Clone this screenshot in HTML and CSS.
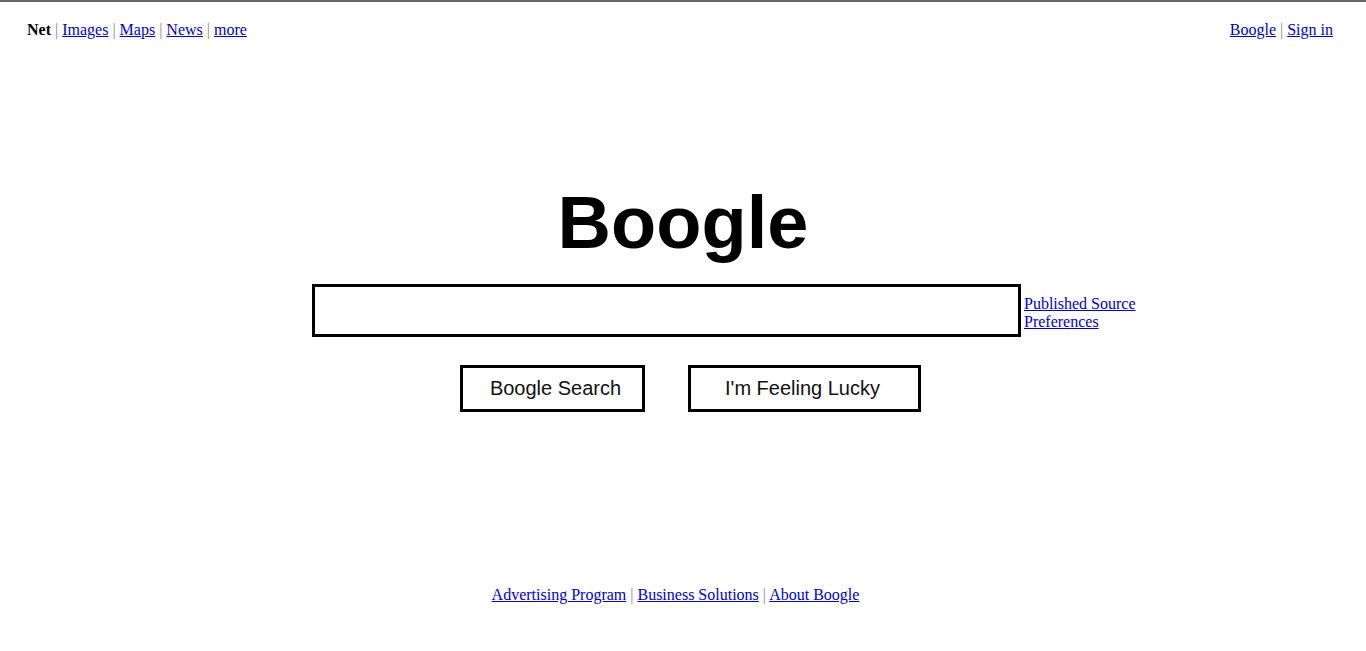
FILE: index.html
```html
<!DOCTYPE html>
<html>
<head>
<meta charset="utf-8">
<title>Boogle</title>
<link rel="stylesheet" href="styles.css">
</head>
<body>
<div class="topbar">
  <div class="nav"><b>Net</b> <span class="sep">|</span> <a href="#">Images</a> <span class="sep">|</span> <a href="#">Maps</a> <span class="sep">|</span> <a href="#">News</a> <span class="sep">|</span> <a href="#">more</a></div>
  <div class="nav"><a href="#">Boogle</a> <span class="sep">|</span> <a href="#">Sign in</a></div>
</div>
<h1 class="logo">Boogle</h1>
<form class="search-form">
  <div class="search-row">
    <input class="search-input" type="text">
    <div class="side-links">
      <a href="#">Published Source</a><br>
      <a href="#">Preferences</a>
    </div>
  </div>
  <div class="buttons">
    <button type="button" class="btn btn-search">Boogle Search</button>
    <button type="button" class="btn btn-lucky">I'm Feeling Lucky</button>
  </div>
</form>
<div class="footer"><a href="#">Advertising Program</a> <span class="sep">|</span> <a href="#">Business Solutions</a> <span class="sep">|</span> <a href="#">About Boogle</a></div>
</body>
</html>
```
FILE: styles.css
```css
html, body {
  margin: 0;
  padding: 0;
  background: #fff;
}
body {
  border-top: 2px solid #666;
  font-family: "Liberation Serif", "Times New Roman", serif;
  font-size: 16px;
  color: #000;
}
a {
  color: #0000cc;
  text-decoration: underline;
}
.sep {
  color: #888;
}
.topbar {
  display: flex;
  justify-content: space-between;
  padding: 19px 33px 0 27px;
  line-height: 18px;
}
.logo {
  margin: 147px 0 0 0;
  font-family: "Liberation Sans", Arial, sans-serif;
  font-weight: bold;
  font-size: 74px;
  line-height: 74px;
  text-align: center;
}
.search-form {
  margin: 0;
}
.search-row {
  margin-top: 24px;
  display: flex;
  align-items: center;
  padding-left: 312px;
}
.search-input {
  width: 709px;
  height: 53px;
  box-sizing: border-box;
  border: 3px solid #000;
  margin: 0;
  padding: 0 6px;
  font-size: 20px;
  outline: none;
}
.side-links {
  margin-left: 3px;
  line-height: 18px;
  padding-top: 4px;
}
.buttons {
  margin-top: 28px;
  display: flex;
  justify-content: center;
  gap: 43px;
  padding-left: 15px;
}
.btn {
  height: 47px;
  box-sizing: border-box;
  border: 3px solid #000;
  background: #fff;
  font-family: "Liberation Sans", Arial, sans-serif;
  font-size: 20px;
  color: #111;
  padding: 0;
  margin: 0;
}
.btn-search {
  width: 185px;
  padding-left: 6px;
}
.btn-lucky {
  width: 233px;
  padding-right: 4px;
}
.footer {
  margin-top: 174px;
  text-align: center;
  line-height: 18px;
  padding-right: 15px;
}
```
